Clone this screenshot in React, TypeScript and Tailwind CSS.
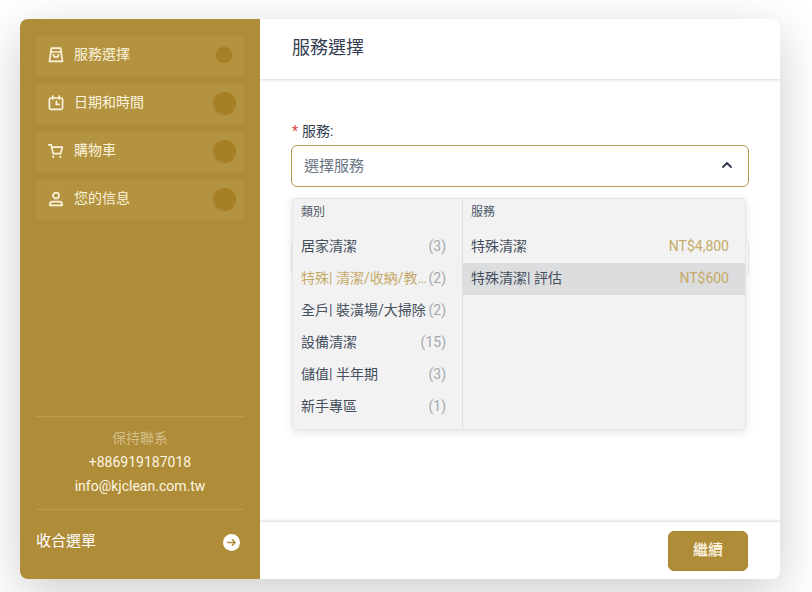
import { ChevronUp } from 'lucide-react';

const font = { fontFamily: 'Roboto, "Noto Sans CJK TC", sans-serif' };

const steps = [
  { label: '服務選擇', icon: 'bag', active: true },
  { label: '日期和時間', icon: 'clock', active: false },
  { label: '購物車', icon: 'cart', active: false },
  { label: '您的信息', icon: 'user', active: false },
];

const categories = [
  { name: '居家清潔', count: 3 },
  { name: '特殊| 清潔/收納/教學', count: 2, active: true },
  { name: '全戶| 裝潢場/大掃除', count: 2 },
  { name: '設備清潔', count: 15 },
  { name: '儲值| 半年期', count: 3 },
  { name: '新手專區', count: 1 },
];

function StepIcon({ name }: { name: string }) {
  return (
    <svg viewBox="0 0 16 16" className="w-4 h-4 shrink-0" fill="none" stroke="#fbf3dc" strokeWidth="1.7" strokeLinecap="round" strokeLinejoin="round">
      {name === 'bag' && (
        <>
          <path d="M3.4 1.2h9.2l1.9 13.2h-13z" />
          <path d="M2.6 5h10.8" />
          <path d="M5.5 7.5c0 3.6 5 3.6 5 0" />
        </>
      )}
      {name === 'clock' && (
        <>
          <rect x="1.4" y="3" width="13.2" height="11.4" rx="1.6" />
          <path d="M4.8 1v3M11.2 1v3" />
          <path d="M8.4 6.4v3h2.6" />
        </>
      )}
      {name === 'cart' && (
        <>
          <path d="M.8 1.8h2.4l2 8.8h7.4l1.8-6.4H3.8" />
          <path d="M5.2 13.6v.4M12.4 13.6v.4" strokeWidth="2" />
        </>
      )}
      {name === 'user' && (
        <>
          <circle cx="8" cy="4.6" r="3" />
          <path d="M2 14.4v-1.2c0-1.6 1.4-2.6 3-2.6h6c1.6 0 3 1 3 2.6v1.2z" />
        </>
      )}
    </svg>
  );
}

export default function App() {
  return (
    <div className="w-[812px] h-[592px] bg-white overflow-hidden pt-[19px] pl-5" style={font}>
      <div className="w-[760px] h-[560px] flex rounded-lg bg-white shadow-[0_14px_50px_rgba(0,0,0,0.2)]">
        {/* Sidebar */}
        <div className="w-60 shrink-0 bg-[#af8c38] rounded-l-lg px-4 pt-4 flex flex-col">
          <div className="flex flex-col gap-2">
            {steps.map((step) => (
              <div key={step.label} className="h-10 rounded bg-[#b39340] pl-3 pr-2 flex items-center">
                <StepIcon name={step.icon} />
                <span className="ml-[10px] text-sm text-[#fbf3dc] leading-none -mt-[2px]">{step.label}</span>
                <span className="ml-auto w-6 flex justify-center">
                  <span className={step.active ? 'w-4 h-4 rounded-full bg-[#a67f26]' : 'w-[23px] h-[23px] rounded-full bg-[#a67f26]'} />
                </span>
              </div>
            ))}
          </div>
          <div className="mt-auto border-t border-[#bb9c50] pt-[9px] flex flex-col items-center">
            <span className="h-6 leading-6 text-sm text-[#d3bf8a]">保持聯系</span>
            <span className="h-6 leading-6 text-sm text-[#fdf6e3]">+886919187018</span>
            <span className="h-6 leading-6 text-sm text-[#fdf6e3]">info@kjclean.com.tw</span>
          </div>
          <div className="mt-[11px] border-t border-[#bb9c50] h-[70px] flex items-center justify-between">
            <span className="text-[15px] text-white -mt-[7px]">收合選單</span>
            <span className="w-[17px] h-[17px] mr-1 -mt-[5px] rounded-full bg-white flex items-center justify-center">
              <svg viewBox="0 0 12 12" className="w-[11px] h-[11px]" fill="none" stroke="#af8c38" strokeWidth="1.6" strokeLinecap="round" strokeLinejoin="round">
                <path d="M2 6h8M7 3l3 3-3 3" />
              </svg>
            </span>
          </div>
        </div>

        {/* Main */}
        <div className="flex-1 flex flex-col min-w-0 overflow-hidden rounded-r-lg">
          <div className="h-[60px] px-8 flex items-center shadow-[0_1px_3px_rgba(0,0,0,0.16)]">
            <span className="text-lg text-[#354052] -mt-[2px]">服務選擇</span>
          </div>
          <div className="flex-1 px-[31px] pt-[42px]">
            <div className="h-[21px] pl-px text-sm text-[#354052] leading-[21px]">
              <span className="text-[#d4453a] mr-1">*</span>服務:
            </div>
            <div className="relative mt-[3px]">
              <div className="h-[42px] rounded-md border border-[#b89a50] bg-white pl-3 pr-[13px] flex items-center justify-between">
                <span className="text-[15px] text-[#6b7583]">選擇服務</span>
                <ChevronUp className="w-4 h-4 -mt-[2px] text-[#354052]" strokeWidth={3} />
              </div>
              {/* Second field behind the open menu */}
              <div className="mt-[51px] h-[38px] rounded-md border border-[#e9e9e9] bg-white" />
              <div className="absolute left-px top-[53px] w-[454px] h-[232px] flex rounded bg-[#f2f2f2] border border-[#e6e6e6] shadow-[0_2px_8px_rgba(0,0,0,0.12)]">
                <div className="w-[170px] shrink-0 border-r border-[#dddddd] pt-[3px]">
                  <div className="h-5 px-2 text-xs leading-5 text-[#4e5866]">類別</div>
                  <div className="mt-[9px] flex flex-col">
                    {categories.map((c) => (
                      <div key={c.name} className="h-8 pl-2 pr-4 pb-0.5 flex items-center justify-between text-sm">
                        <span className={c.active ? 'truncate text-[#c5aa68]' : 'truncate text-[#454f5e]'}>{c.name}</span>
                        <span className="shrink-0 text-[#a4a9b0] ml-px">({c.count})</span>
                      </div>
                    ))}
                  </div>
                </div>
                <div className="flex-1 min-w-0 pt-[3px]">
                  <div className="h-5 px-2 text-xs leading-5 text-[#4e5866]">服務</div>
                  <div className="mt-[9px] flex flex-col">
                    <div className="h-8 pl-2 pr-4 pb-0.5 flex items-center justify-between text-sm">
                      <span className="text-[#454f5e]">特殊清潔</span>
                      <span className="text-[#c5aa68]">NT$4,800</span>
                    </div>
                    <div className="h-8 pl-2 pr-4 pb-0.5 flex items-center justify-between text-sm bg-[#dcddde]">
                      <span className="text-[#454f5e]">特殊清潔| 評估</span>
                      <span className="text-[#c5aa68]">NT$600</span>
                    </div>
                  </div>
                </div>
              </div>
            </div>
          </div>
          <div className="h-[57px] px-8 flex items-center justify-end shadow-[0_-1px_3px_rgba(0,0,0,0.16)]">
            <button className="w-20 h-10 rounded-md bg-[#af8c38] border border-[#a58432] text-[15px] font-medium text-[#fdf6e3]">繼續</button>
          </div>
        </div>
      </div>
    </div>
  );
}
